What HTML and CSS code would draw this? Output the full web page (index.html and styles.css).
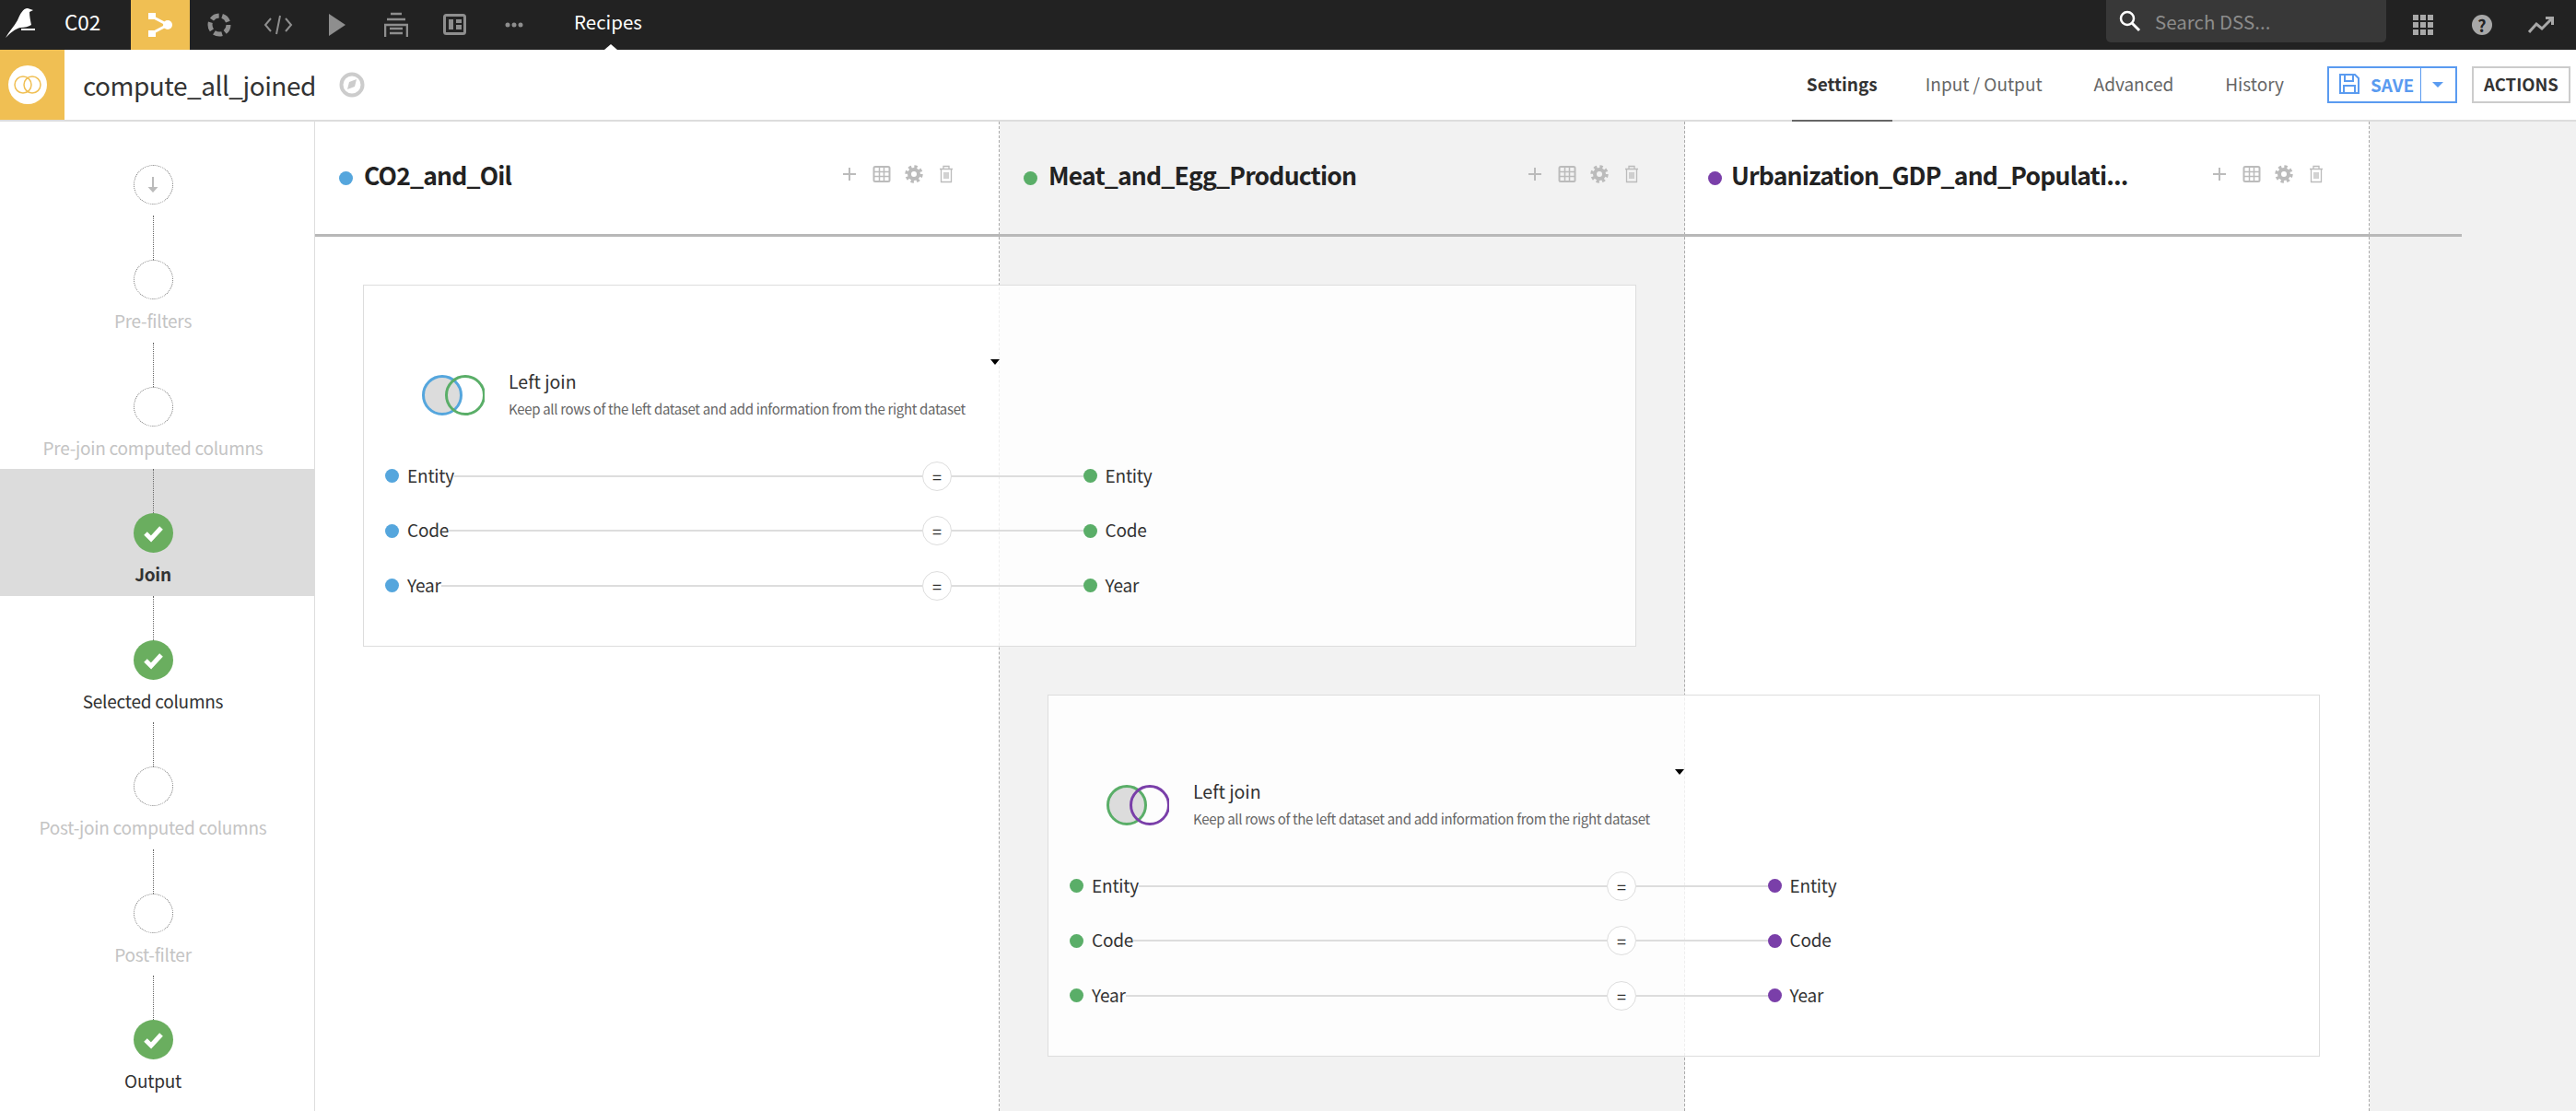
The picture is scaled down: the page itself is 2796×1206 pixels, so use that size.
FILE: index.html
```html
<!DOCTYPE html>
<html>
  <head>
    <title>compute_all_joined</title>
    <link rel="stylesheet" href="styles.css">
  </head>
  <body>
    <svg class="defs" width="0" height="0">
      <symbol id="i-check" viewBox="0 0 43 43">
        <path d="M13 22l6 6 11-12" fill="none" stroke="#fff" stroke-width="5"/>
      </symbol>
      <symbol id="i-plus" viewBox="0 0 20 20">
        <path d="M10 3v14M3 10h14" stroke="#bbb" stroke-width="2"/>
      </symbol>
      <symbol id="i-table" viewBox="0 0 20 20">
        <rect x="1.5" y="2" width="17" height="16" rx="1.5" fill="none" stroke="#bbb" stroke-width="2"/>
        <path d="M1.5 7.5h17M1.5 12.5h17M7.5 2v16M12.5 2v16" stroke="#bbb" stroke-width="1.5"/>
      </symbol>
      <symbol id="i-gear" viewBox="0 0 20 20">
        <circle cx="10" cy="10" r="5" fill="none" stroke="#bbb" stroke-width="4"/>
        <circle cx="10" cy="10" r="8" fill="none" stroke="#bbb" stroke-width="3.4" stroke-dasharray="3.3 3"/>
      </symbol>
      <symbol id="i-trash" viewBox="0 0 20 20">
        <path d="M3 4.5h14M7 4.500V1.500h6v3M4.500 4.500v14h11v-14M8 8v7M10 8v7M12 8v7" fill="none" stroke="#bbb" stroke-width="1.300"/>
      </symbol>
    </svg>

    <header class="topbar">
      <div class="logo">
        <svg width="40" height="54" viewBox="0 0 40 54">
          <path d="M6 41C10 34 15 29 19 22C22 15 25 9 30 9L36 11L32 13C32 18 33 22 34 27C31 29 27 30 22 30C17 31 11 36 6 41Z" fill="#fff"/>
          <rect x="23" y="31" width="15" height="2" fill="#fff"/>
        </svg>
      </div>
      <div class="project">C02</div>
      <nav class="nav">
        <a class="nav-item nav-active">
          <svg width="26" height="28" viewBox="0 0 26 28">
            <path d="M4 5L21 14L4 23" fill="none" stroke="#fff" stroke-width="3"/>
            <rect x="0" y="1" width="8" height="7" fill="#fff"/>
            <rect x="0" y="20" width="8" height="7" fill="#fff"/>
            <circle cx="21" cy="14" r="5" fill="#fff"/>
          </svg>
        </a>
        <a class="nav-item">
          <svg width="26" height="28" viewBox="0 0 26 28">
            <circle cx="13" cy="14" r="10" fill="none" stroke="#8e8e8e" stroke-width="5" stroke-dasharray="9 3.500"/>
          </svg>
        </a>
        <a class="nav-item">
          <svg width="32" height="28" viewBox="0 0 32 28">
            <path d="M8 7L2 14L8 21M24 7L30 14L24 21M18 4L14 24" fill="none" stroke="#8e8e8e" stroke-width="2"/>
          </svg>
        </a>
        <a class="nav-item">
          <svg width="20" height="26" viewBox="0 0 20 26">
            <path d="M1 1L19 13L1 25Z" fill="#8e8e8e"/>
          </svg>
        </a>
        <a class="nav-item">
          <svg width="26" height="28" viewBox="0 0 26 28">
            <path d="M7 2h12M3 8h20M1 27V14h24v13M6 18h14M6 23h14" fill="none" stroke="#8e8e8e" stroke-width="2.500"/>
          </svg>
        </a>
        <a class="nav-item">
          <svg width="26" height="24" viewBox="0 0 26 24">
            <rect x="1.500" y="1.500" width="22" height="20" rx="2" fill="none" stroke="#8e8e8e" stroke-width="3"/>
            <path d="M6 6h5v11H6zM14 6h6v4h-6zM14 12h6v5h-6z" fill="#8e8e8e"/>
          </svg>
        </a>
        <a class="nav-item">
          <svg width="20" height="6" viewBox="0 0 20 6">
            <circle cx="3" cy="3" r="2.500" fill="#8e8e8e"/>
            <circle cx="10" cy="3" r="2.500" fill="#8e8e8e"/>
            <circle cx="17" cy="3" r="2.500" fill="#8e8e8e"/>
          </svg>
        </a>
      </nav>
      <div class="section">Recipes</div>
      <div class="search">
        <svg width="26" height="26" viewBox="0 0 26 26">
          <circle cx="10" cy="10" r="7" fill="none" stroke="#fff" stroke-width="2.500"/>
          <path d="M15 15l8 8" stroke="#fff" stroke-width="3"/>
        </svg>
        <span>Search DSS...</span>
      </div>
      <a class="top-icon">
        <svg class="apps" width="22" height="22" viewBox="0 0 22 22">
          <path d="M0 0h6v6H0zM8 0h6v6H8zM16 0h6v6h-6zM0 8h6v6H0zM8 8h6v6H8zM16 8h6v6h-6zM0 16h6v6H0zM8 16h6v6H8zM16 16h6v6h-6z" fill="#a8a8a8"/>
        </svg>
      </a>
      <a class="top-icon">
        <span class="help">?</span>
      </a>
      <a class="top-icon">
        <svg width="28" height="18" viewBox="0 0 28 18">
          <path d="M1 17L9 8L15 13L26 2M19 1.500h7.500V9" fill="none" stroke="#a8a8a8" stroke-width="3"/>
        </svg>
      </a>
    </header>

    <div class="subbar">
      <div class="recipe-icon">
        <span class="recipe-disc">
          <svg width="32" height="24" viewBox="0 0 32 24">
            <circle cx="11" cy="12" r="9" fill="none" stroke="#f0bf53" stroke-width="1.500"/>
            <circle cx="21" cy="12" r="9" fill="none" stroke="#f0bf53" stroke-width="1.500"/>
          </svg>
        </span>
      </div>
      <h1 class="recipe-name">compute_all_joined</h1>
      <svg class="compass" width="28" height="28" viewBox="0 0 28 28">
        <circle cx="14" cy="14" r="11.500" fill="none" stroke="#ccc" stroke-width="4"/>
        <path d="M9 19L11 11L19 8L17 16Z" fill="#ccc"/>
      </svg>
      <div class="tabs">
        <a class="tab tab-active">Settings</a>
        <a class="tab">Input / Output</a>
        <a class="tab">Advanced</a>
        <a class="tab">History</a>
      </div>
      <div class="save">
        <a class="save-main">
          <svg width="24" height="24" viewBox="0 0 24 24">
            <path d="M2 2h16l4 4v16H2zM7 2v7h9V2M6 22v-8h12v8" fill="none" stroke="#5a9bf0" stroke-width="2"/>
          </svg>
          SAVE
        </a>
        <a class="save-arrow"></a>
      </div>
      <a class="actions">ACTIONS</a>
    </div>

    <div class="content">
      <aside class="steps">
        <div class="step step-first">
          <span class="circle">
            <svg width="14" height="18" viewBox="0 0 14 18">
              <path d="M7 0v14" stroke="#bbb" stroke-width="2"/>
              <path d="M1.500 11h11L7 17Z" fill="#bbb"/>
            </svg>
          </span>
        </div>
        <div class="step">
          <span class="step-line"></span>
          <span class="circle"></span>
          <span class="step-label">Pre-filters</span>
        </div>
        <div class="step">
          <span class="step-line"></span>
          <span class="circle"></span>
          <span class="step-label">Pre-join computed columns</span>
        </div>
        <div class="step step-done step-active">
          <span class="step-line"></span>
          <svg class="circle-done" width="43" height="43"><use href="#i-check"/></svg>
          <span class="step-label">Join</span>
        </div>
        <div class="step step-done">
          <span class="step-line"></span>
          <svg class="circle-done" width="43" height="43"><use href="#i-check"/></svg>
          <span class="step-label">Selected columns</span>
        </div>
        <div class="step">
          <span class="step-line"></span>
          <span class="circle"></span>
          <span class="step-label">Post-join computed columns</span>
        </div>
        <div class="step">
          <span class="step-line"></span>
          <span class="circle"></span>
          <span class="step-label">Post-filter</span>
        </div>
        <div class="step step-done">
          <span class="step-line"></span>
          <svg class="circle-done" width="43" height="43"><use href="#i-check"/></svg>
          <span class="step-label">Output</span>
        </div>
      </aside>

      <main class="board">
        <section class="column col-a">
          <div class="col-head">
            <span class="dot dot-blue"></span>
            <span class="col-title">CO2_and_Oil</span>
            <span class="col-icons">
              <svg><use href="#i-plus"/></svg>
              <svg><use href="#i-table"/></svg>
              <svg><use href="#i-gear"/></svg>
              <svg><use href="#i-trash"/></svg>
            </span>
          </div>
        </section>
        <section class="column col-b">
          <div class="col-head">
            <span class="dot dot-green"></span>
            <span class="col-title">Meat_and_Egg_Production</span>
            <span class="col-icons">
              <svg><use href="#i-plus"/></svg>
              <svg><use href="#i-table"/></svg>
              <svg><use href="#i-gear"/></svg>
              <svg><use href="#i-trash"/></svg>
            </span>
          </div>
        </section>
        <section class="column col-c">
          <div class="col-head">
            <span class="dot dot-purple"></span>
            <span class="col-title">Urbanization_GDP_and_Populati...</span>
            <span class="col-icons">
              <svg><use href="#i-plus"/></svg>
              <svg><use href="#i-table"/></svg>
              <svg><use href="#i-gear"/></svg>
              <svg><use href="#i-trash"/></svg>
            </span>
          </div>
        </section>
        <section class="column col-rest"></section>
        <div class="head-rule"></div>

        <article class="join-card card-one">
          <div class="join-head">
            <svg class="venn" width="68" height="46" viewBox="0 0 68 46">
              <circle cx="22" cy="23" r="20.500" fill="#dcdcdc" stroke="#55a6dd" stroke-width="3"/>
              <circle cx="47" cy="23" r="20.500" fill="none" stroke="#5aae68" stroke-width="3"/>
            </svg>
            <div class="join-text">
              <div class="join-type">Left join</div>
              <div class="join-desc">Keep all rows of the left dataset and add information from the right dataset</div>
            </div>
            <span class="caret"></span>
          </div>
          <div class="cond">
            <span class="cond-left"><span class="dot dot-blue"></span><span class="cond-name">Entity</span><span class="cond-line"></span></span>
            <span class="eq">=</span>
            <span class="cond-line cond-mid"></span>
            <span class="dot dot-green"></span><span class="cond-name">Entity</span>
          </div>
          <div class="cond">
            <span class="cond-left"><span class="dot dot-blue"></span><span class="cond-name">Code</span><span class="cond-line"></span></span>
            <span class="eq">=</span>
            <span class="cond-line cond-mid"></span>
            <span class="dot dot-green"></span><span class="cond-name">Code</span>
          </div>
          <div class="cond">
            <span class="cond-left"><span class="dot dot-blue"></span><span class="cond-name">Year</span><span class="cond-line"></span></span>
            <span class="eq">=</span>
            <span class="cond-line cond-mid"></span>
            <span class="dot dot-green"></span><span class="cond-name">Year</span>
          </div>
        </article>

        <article class="join-card card-two">
          <div class="join-head">
            <svg class="venn" width="68" height="46" viewBox="0 0 68 46">
              <circle cx="22" cy="23" r="20.500" fill="#dcdcdc" stroke="#5aae68" stroke-width="3"/>
              <circle cx="47" cy="23" r="20.500" fill="none" stroke="#7a3fa9" stroke-width="3"/>
            </svg>
            <div class="join-text">
              <div class="join-type">Left join</div>
              <div class="join-desc">Keep all rows of the left dataset and add information from the right dataset</div>
            </div>
            <span class="caret"></span>
          </div>
          <div class="cond">
            <span class="cond-left"><span class="dot dot-green"></span><span class="cond-name">Entity</span><span class="cond-line"></span></span>
            <span class="eq">=</span>
            <span class="cond-line cond-mid"></span>
            <span class="dot dot-purple"></span><span class="cond-name">Entity</span>
          </div>
          <div class="cond">
            <span class="cond-left"><span class="dot dot-green"></span><span class="cond-name">Code</span><span class="cond-line"></span></span>
            <span class="eq">=</span>
            <span class="cond-line cond-mid"></span>
            <span class="dot dot-purple"></span><span class="cond-name">Code</span>
          </div>
          <div class="cond">
            <span class="cond-left"><span class="dot dot-green"></span><span class="cond-name">Year</span><span class="cond-line"></span></span>
            <span class="eq">=</span>
            <span class="cond-line cond-mid"></span>
            <span class="dot dot-purple"></span><span class="cond-name">Year</span>
          </div>
        </article>
      </main>
    </div>
  </body>
</html>
```

FILE: styles.css
```css
html,
body {
  margin: 0;
  height: 100%;
}

body {
  display: flex;
  flex-direction: column;
  height: 1206px;
  overflow: hidden;
  font-family: "Noto Sans CJK SC", "Noto Sans", sans-serif;
  color: #333;
  background: #fff;
}

.defs {
  position: absolute;
}

/* top bar */
.topbar {
  display: flex;
  align-items: center;
  flex: none;
  height: 54px;
  padding-right: 6px;
  background: #222;
  color: #fff;
}

.logo {
  width: 70px;
  height: 54px;
  flex: none;
}

.project {
  width: 72px;
  height: 54px;
  font-size: 22.500px;
  line-height: 46px;
}

.nav {
  display: flex;
  height: 54px;
}

.nav-item {
  display: flex;
  align-items: center;
  justify-content: center;
  width: 64px;
}

.nav-active {
  background: #f0bf53;
}

.section {
  position: relative;
  height: 54px;
  margin-left: 33px;
  font-size: 20.500px;
  line-height: 46px;
}

.section::after {
  content: "";
  position: absolute;
  left: 33px;
  bottom: 0;
  border-left: 7px solid transparent;
  border-right: 7px solid transparent;
  border-bottom: 6px solid #fff;
}

.search {
  display: flex;
  align-items: center;
  gap: 14px;
  width: 304px;
  height: 46px;
  margin: 0 8px 8px auto;
  padding-left: 13px;
  box-sizing: border-box;
  border-radius: 0 0 5px 5px;
  background: #383838;
  color: #8c8c8c;
  font-size: 20.500px;
}

.top-icon {
  display: flex;
  align-items: center;
  justify-content: center;
  width: 64px;
}

.help {
  width: 22px;
  height: 22px;
  border-radius: 50%;
  background: #a8a8a8;
  color: #222;
  font-size: 18px;
  font-weight: 700;
  line-height: 22px;
  text-align: center;
}

/* recipe title bar */
.subbar {
  display: flex;
  align-items: center;
  flex: none;
  height: 76px;
  border-bottom: 2px solid #ddd;
}

.recipe-icon {
  display: flex;
  align-items: center;
  justify-content: center;
  width: 70px;
  height: 76px;
  background: #f0bf53;
}

.recipe-disc {
  display: flex;
  align-items: center;
  justify-content: center;
  width: 42px;
  height: 42px;
  margin-left: -10px;
  border-radius: 50%;
  background: #fff;
}

.recipe-name {
  margin: 0 0 0 20px;
  font-size: 28px;
  font-weight: 400;
  letter-spacing: -0.500px;
  line-height: 40px;
}

.compass {
  margin-left: 25px;
}

.tabs {
  display: flex;
  align-self: stretch;
  gap: 24px;
  margin-left: auto;
}

.tab {
  display: flex;
  align-items: center;
  height: 73px;
  padding: 0 16px 3px;
  margin-bottom: -2px;
  color: #666;
  font-size: 19px;
}

.tab-active {
  margin-right: -4px;
  border-bottom: 2px solid #666;
  color: #333;
  font-weight: 700;
}

.save {
  display: flex;
  width: 141px;
  height: 40px;
  margin-left: 31px;
  box-sizing: border-box;
  border: 2px solid #5a9bf0;
  color: #5a9bf0;
}

.save-main {
  display: flex;
  align-items: center;
  gap: 11px;
  width: 100px;
  padding: 0 0 2px 10px;
  box-sizing: border-box;
  border-right: 1px solid #5a9bf0;
  font-size: 19px;
  font-weight: 700;
}

.save-arrow {
  align-self: center;
  margin-left: 12px;
  border-left: 6px solid transparent;
  border-right: 6px solid transparent;
  border-top: 6px solid #5a9bf0;
}

.actions {
  display: flex;
  align-items: center;
  justify-content: center;
  width: 107px;
  height: 40px;
  margin: 0 6px 0 16px;
  padding-bottom: 2px;
  box-sizing: border-box;
  border: 2px solid #ccc;
  font-size: 18.500px;
  font-weight: 700;
}

/* steps on the left */
.content {
  display: flex;
  flex: 1;
  min-height: 0;
}

.steps {
  flex: none;
  width: 341px;
  padding-top: 47px;
  border-right: 1px solid #ddd;
}

.step {
  display: flex;
  flex-direction: column;
  align-items: center;
  height: 137.500px;
  padding-right: 9px;
  box-sizing: border-box;
  color: #c4c4c4;
}

.step-first {
  height: 55px;
}

.step-line {
  flex: none;
  height: 48px;
  border-left: 1px dotted #666;
}

.circle {
  display: flex;
  align-items: center;
  justify-content: center;
  flex: none;
  width: 43px;
  height: 43px;
  box-sizing: border-box;
  border: 1px dotted #777;
  border-radius: 50%;
}

.circle-done {
  flex: none;
  border-radius: 50%;
  background: #6aae5f;
}

.step-label {
  margin-top: 11px;
  font-size: 19px;
  letter-spacing: -0.250px;
  line-height: 24px;
  white-space: nowrap;
}

.step-done {
  color: #333;
}

.step-active {
  background: #dcdcdc;
  font-weight: 700;
}

/* join board */
.board {
  display: grid;
  flex: 1;
  min-width: 0;
  grid-template-columns: 743px 744px 743px 1fr;
  grid-template-rows: 125px 445px 445px 1fr;
}

.column {
  grid-row: 1 / -1;
  min-width: 0;
  box-sizing: border-box;
  border-right: 1px dashed #aaa;
}

.col-a {
  grid-column: 1;
}

.col-b {
  grid-column: 2;
  background: #f2f2f2;
}

.col-c {
  grid-column: 3;
}

.col-rest {
  grid-column: 4;
  border-right: 0;
  background: #f1f1f1;
}

.col-head {
  display: flex;
  align-items: center;
  height: 122px;
  padding: 0 47px 0 26px;
}

.col-c .col-head {
  padding-left: 25px;
}

.col-title {
  width: 435px;
  margin: -7px 0 0 12px;
  color: #222;
  font-size: 26.500px;
  font-weight: 600;
  letter-spacing: -0.800px;
  line-height: 40px;
  white-space: nowrap;
}

.col-c .col-title {
  margin-left: 10px;
}

.col-icons {
  display: flex;
  gap: 15px;
  margin: -8px 0 0 auto;
}

.col-icons svg {
  width: 20px;
  height: 20px;
}

.head-rule {
  grid-column: 1 / -1;
  grid-row: 1;
  align-self: end;
  width: 2330px;
  height: 3px;
  background: #b8b8b8;
}

.dot {
  flex: none;
  display: inline-block;
  width: 15px;
  height: 15px;
  border-radius: 50%;
}

.dot-blue {
  background: #55a6dd;
}

.dot-green {
  background: #5aae68;
}

.dot-purple {
  background: #7a3fa9;
}

.join-card {
  grid-row: 2;
  height: 393px;
  margin: 52px 0 0 52px;
  padding-top: 82px;
  box-sizing: border-box;
  border: 1px solid #ddd;
  background: rgba(255, 255, 255, 0.8);
}

.card-one {
  grid-column: 1 / 3;
  width: 1382px;
}

.card-two {
  grid-column: 2 / 4;
  grid-row: 3;
  width: 1381px;
}

.join-head {
  display: flex;
  height: 70px;
  width: 690px;
  margin-bottom: 25px;
}

.venn {
  flex: none;
  margin: 14px 0 0 63px;
}

.join-text {
  margin-left: 26px;
  padding-top: 8px;
}

.join-type {
  font-size: 19.500px;
  line-height: 28px;
}

.join-desc {
  margin-top: 5px;
  color: #666;
  font-size: 15px;
  letter-spacing: -0.330px;
  line-height: 22px;
  white-space: nowrap;
}

.caret {
  flex: none;
  height: 0;
  margin: -2px 0 0 auto;
  border-left: 5.500px solid transparent;
  border-right: 5.500px solid transparent;
  border-top: 6px solid #000;
}

.cond {
  display: flex;
  align-items: center;
  height: 59.500px;
  padding-left: 23px;
}

.cond-left {
  display: flex;
  align-items: center;
  flex: none;
  width: 583px;
}

.cond-name {
  margin: -2px 0 0 9px;
  color: #333;
  font-size: 19px;
  letter-spacing: -0.200px;
  line-height: 28px;
}

.cond-line {
  flex: 1;
  height: 2px;
  background: #ddd;
}

.cond-mid {
  flex: none;
  width: 142.500px;
}

.eq {
  flex: none;
  width: 32px;
  height: 32px;
  box-sizing: border-box;
  border: 1px solid #ddd;
  border-radius: 50%;
  background: #fff;
  color: #333;
  font-size: 18px;
  line-height: 30px;
  text-align: center;
}
```
